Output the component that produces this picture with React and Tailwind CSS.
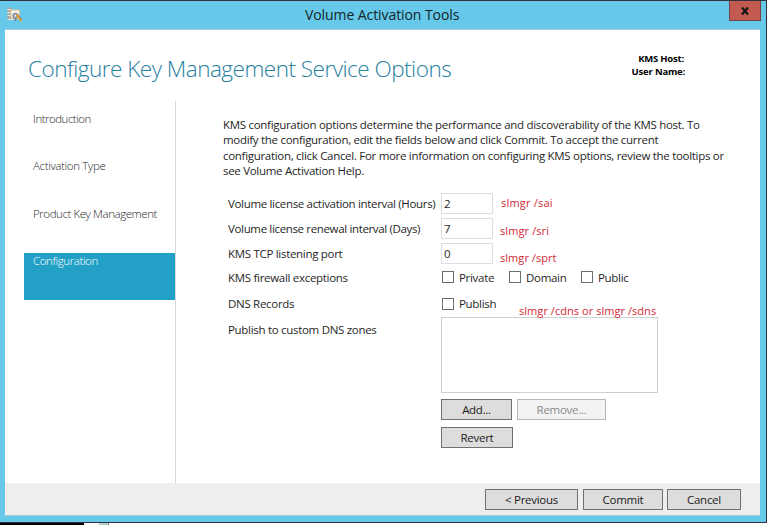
const NAV = [
  ['Introduction', 'tracking-[-0.5px]'],
  ['Activation Type', 'tracking-[-0.35px]'],
  ['Product Key Management', 'tracking-[-0.43px]'],
  ['Configuration', 'tracking-[-0.4px]'],
];

function Button({ className, children, disabled }) {
  const tone = disabled
    ? 'border-[#b4b8ba] bg-[#f3f3f3] text-[#8a8a8a]'
    : 'border-[#707070] bg-[#dddddd] text-[#1c1c1c]';
  return (
    <button disabled={disabled} className={`flex h-[21px] shrink-0 items-center justify-center border pt-px text-[11.5px] leading-none tracking-[-0.28px] whitespace-nowrap ${tone} ${className}`}>
      {children}
    </button>
  );
}

function Row({ label, className, children }) {
  return (
    <div className={`flex items-center ${className}`}>
      <span className="w-[213px] shrink-0 whitespace-nowrap">{label}</span>
      {children}
    </div>
  );
}

function Field({ value }) {
  return <div className="flex h-[21px] w-[52px] items-center border border-[#dcdee6] pl-[2px]">{value}</div>;
}

function Check({ label, className }) {
  return (
    <label className={`flex shrink-0 items-center gap-[5px] pl-px ${className}`}>
      <span className="h-[12px] w-[12px] shrink-0 border border-[#6e6e6e] bg-white" />
      <span>{label}</span>
    </label>
  );
}

function Note({ className, children }) {
  return <span className={`absolute text-[11px] leading-[14px] font-medium whitespace-nowrap text-[#cf2a32] ${className}`}>{children}</span>;
}

export default function App() {
  return (
    <div className="relative flex h-[525px] w-[768px] flex-col overflow-hidden bg-white font-['Open_Sans','Noto_Sans',sans-serif] text-[11.5px] leading-[15px] tracking-[-0.3px] text-[#1f1f1f]">
      <div className="flex h-[523px] w-[767px] flex-col border-t border-r border-b border-[#30343c] bg-[#66c9e9]">
        <header className="flex h-[28px] shrink-0 items-start">
          <svg className="mt-[6px] ml-[7px] h-[16px] w-[16px]" viewBox="0 0 16 16">
            <path d="M.5 .5h4.500v12h-4.500z" fill="#aaa8a5" />
            <path d="M.5 2.500h3.500M.5 5.500h3.500M.5 8.500h3.500M.5 12.500h6" stroke="#eee9df" />
            <path d="M4 3h8.500v8.500H4z" fill="#fbf6ec" stroke="#d8bd98" />
            <path d="M6.500 11V8.500Q6.500 6.500 8.500 6.500T10.500 8.500L8.500 11v3" fill="none" stroke="#78809a" strokeWidth="1.700" />
            <path d="M9.500 7.500l5 6.500" stroke="#e0a238" strokeWidth="2.200" />
            <path d="M11 7.500l4.200 5.500" stroke="#6e7690" strokeWidth=".8" />
          </svg>
          <h1 className="mt-[5px] ml-[282px] w-[154px] text-[14px] leading-[17px] tracking-[-0.08px] whitespace-nowrap text-[#14242b]">Volume Activation Tools</h1>
          <button className="ml-[270px] flex h-[20px] w-[32px] items-center justify-center border border-t-0 border-[#70444a] bg-[#c35a50]">
            <svg width="8" height="8" viewBox="0 0 8 8"><path d="M1 .5l6 7M7 .5l-6 7" stroke="#151515" strokeWidth="2.2" /></svg>
          </button>
        </header>
        <div className="mr-[6px] ml-[5px] flex h-[487px] shrink-0 flex-col border-t border-b border-[#a9cbd9] bg-white">
          <div className="flex h-[71px] shrink-0 justify-between">
            <h2 className="mt-[23px] ml-[23px] text-[22.5px] leading-[32px] font-light tracking-[-0.5px] whitespace-nowrap text-[#26809f]">Configure Key Management Service Options</h2>
            <div className="mt-[23px] mr-[75px] flex flex-col items-end text-[9.5px] leading-[12.5px] font-bold tracking-[-0.2px] text-black">
              <span className="mr-[1px]">KMS Host:</span>
              <span>User Name:</span>
            </div>
          </div>
          <div className="flex h-[382px] shrink-0">
            <nav className="w-[171px] shrink-0 border-r border-[#d9d9d9] pt-[9px] pl-[19px]">
              {NAV.map(([name, spacing], i) => (
                <div key={name} className={`h-[47.5px] pt-[0.5px] pl-[9px] font-[330] whitespace-nowrap ${spacing} ${i === 3 ? 'bg-[#22a0c5] text-white' : 'text-[#2a2a2a]'}`}>
                  {name}
                </div>
              ))}
            </nav>
            <main className="flex flex-col pt-[16px] pl-[47px]">
              <p className="h-[76px] leading-[15.3px] whitespace-nowrap">
                KMS configuration options determine the performance and discoverability of the KMS host. To<br />
                modify the configuration, edit the fields below and click Commit. To accept the current<br />
                configuration, click Cancel. For more information on configuring KMS options, review the tooltips or<br />
                see Volume Activation Help.
              </p>
              <div className="flex flex-col pl-[5px]">
                <Row label="Volume license activation interval (Hours)" className="h-[21px] tracking-[-0.33px]"><Field value="2" /></Row>
                <Row label="Volume license renewal interval (Days)" className="mt-[4px] h-[21px] tracking-[-0.35px]"><Field value="7" /></Row>
                <Row label="KMS TCP listening port" className="mt-[4px] h-[21px]"><Field value="0" /></Row>
                <Row label="KMS firewall exceptions" className="mt-[5px] h-[16px]">
                  <Check label="Private" className="w-[67px]" />
                  <Check label="Domain" className="w-[72px]" />
                  <Check label="Public" className="" />
                </Row>
                <Row label="DNS Records" className="mt-[11px] h-[15px]"><Check label="Publish" className="" /></Row>
                <div className="mt-[6px] flex items-start">
                  <span className="mt-[5px] w-[213px] shrink-0 whitespace-nowrap">Publish to custom DNS zones</span>
                  <div className="h-[76px] w-[217px] border border-[#cfcfcf]" />
                </div>
                <div className="mt-[6px] ml-[213px] flex gap-[5px]">
                  <Button className="w-[71px]">Add...</Button>
                  <Button className="w-[89px]" disabled>Remove...</Button>
                </div>
                <div className="mt-[7px] ml-[213px] flex">
                  <Button className="w-[72px]">Revert</Button>
                </div>
              </div>
            </main>
          </div>
          <footer className="flex flex-1 items-start justify-end gap-[4px] bg-[#eeeeee] pt-[6px] pr-[19px]">
            <Button className="mr-px w-[93px]">&lt; Previous</Button>
            <Button className="w-[80px]">Commit</Button>
            <Button className="w-[74px]">Cancel</Button>
          </footer>
        </div>
      </div>
      <div className="flex h-[2px]">
        <div className="w-[84px] bg-black" />
        <div className="ml-[15px] w-[9px] bg-[#b6cdd0]" />
        <div className="w-px bg-[#777]" />
      </div>
      <Note className="top-[196px] left-[501px] tracking-[0.2px]">slmgr /sai</Note>
      <Note className="top-[224px] left-[500px] tracking-[0.1px]">slmgr /sri</Note>
      <Note className="top-[251px] left-[500px] tracking-[0.05px]">slmgr /sprt</Note>
      <Note className="top-[304px] left-[519px] tracking-[0.05px]">slmgr /cdns or slmgr /sdns</Note>
    </div>
  );
}
